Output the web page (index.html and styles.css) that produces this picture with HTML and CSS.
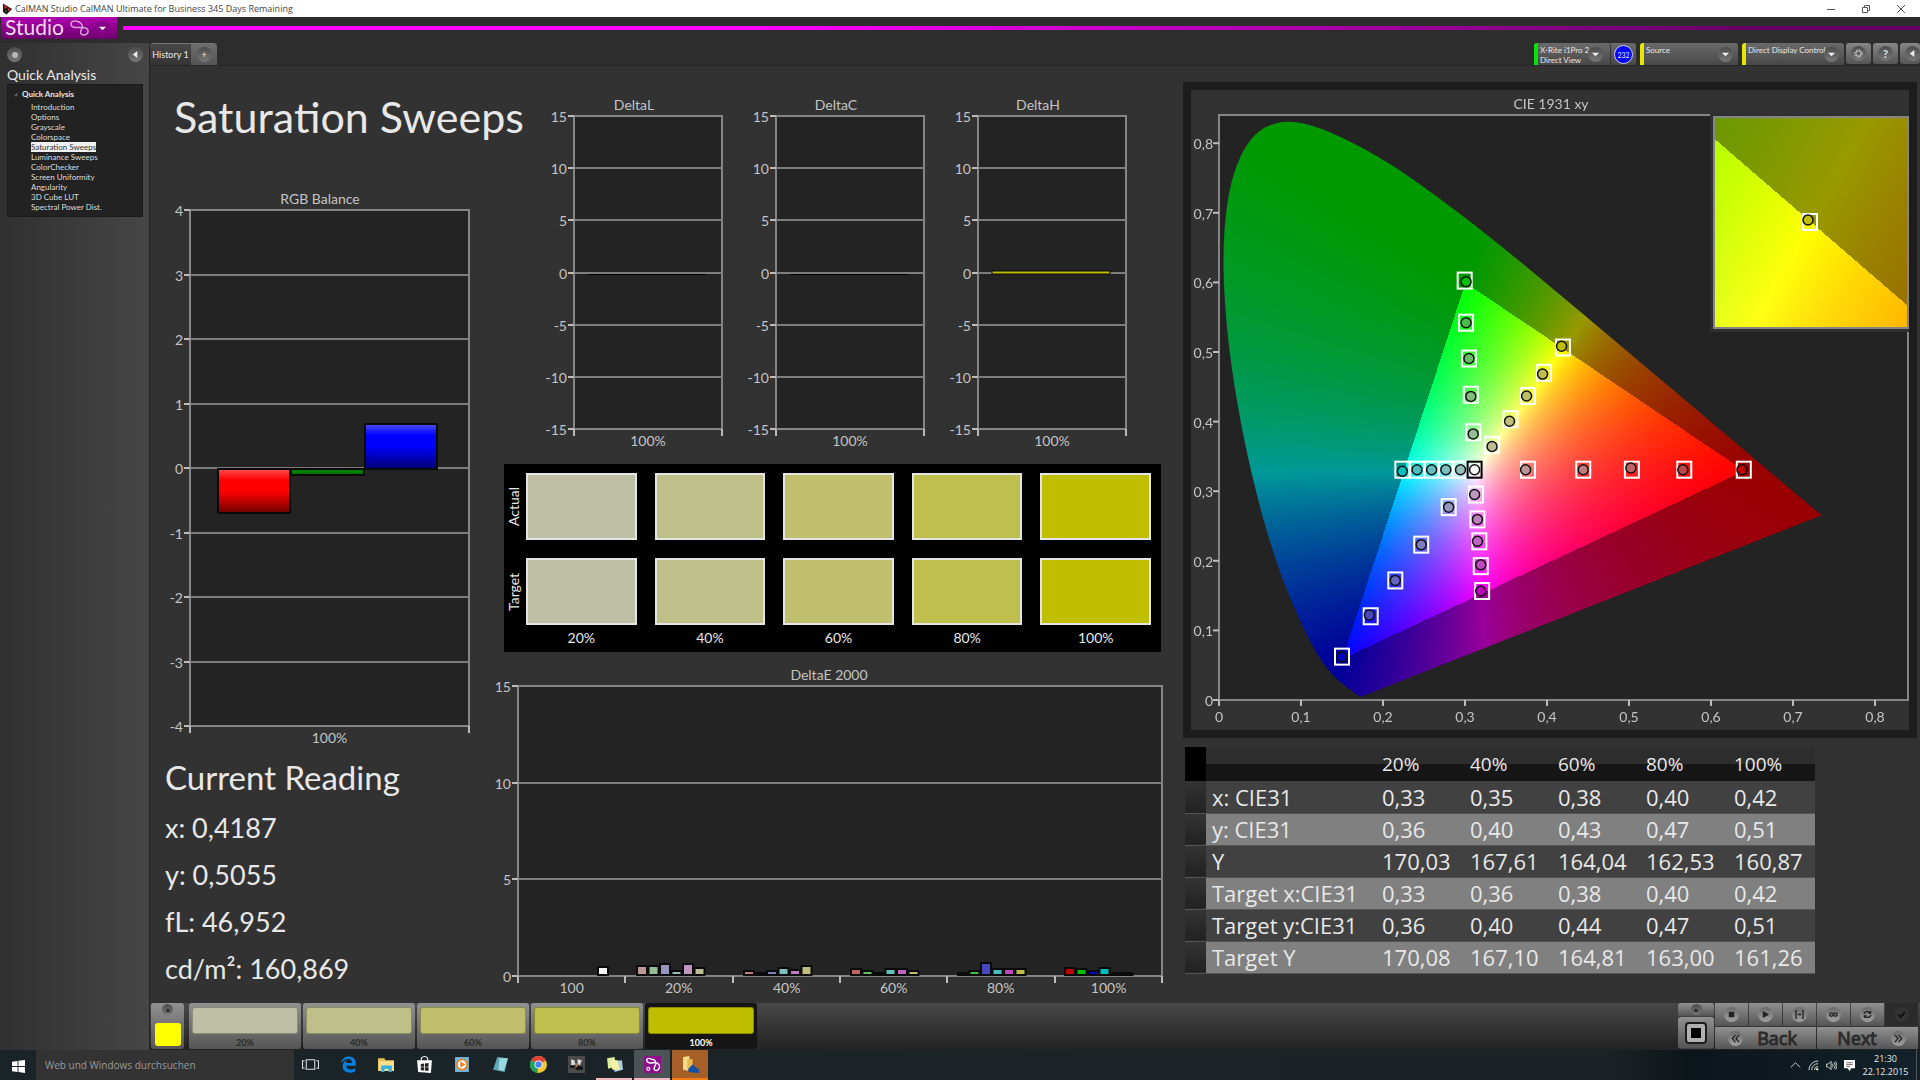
FILE: index.html
```html
<!DOCTYPE html>
<html lang="en">
<head>
  <meta charset="UTF-8">
  <title>CalMAN Studio</title>
  <link rel="stylesheet" href="styles.css">
  <script src="charts.js" defer></script>
</head>
<body>
  <header class="titlebar">
    <svg class="app-icon" viewBox="0 0 12 12"><path d="M1 0l10 6-6 6-4-3z" fill="#201010"/><path d="M2 1l4 3-3 2z" fill="#c22"/><path d="M6 5l3 1-2 3z" fill="#c33"/><path d="M3 7l2 1 0 2z" fill="#2a4"/></svg>
    <span>CalMAN Studio CalMAN Ultimate for Business 345 Days Remaining</span>
    <div class="window-buttons">
      <button aria-label="Minimize"><svg viewBox="0 0 10 10"><path d="M1 5.5h8"/></svg></button>
      <button aria-label="Restore"><svg viewBox="0 0 10 10"><path d="M1.5 3.5h5v5h-5zM3.5 3.5v-2h5v5h-2"/></svg></button>
      <button aria-label="Close"><svg viewBox="0 0 10 10"><path d="M1 1l8 8M9 1l-8 8"/></svg></button>
    </div>
  </header>

  <div class="brandbar">
    <button class="brand">
      <span>Studio</span>
      <svg class="brand-logo" viewBox="0 0 20 17"><path d="M10 2C5 0 0 1 1 5s6 3 9 3 8-1 9 3-4 6-7 4 2-6 1-9-3-4-5-4" fill="none" stroke="#d9a0d9" stroke-width="1.6"/></svg>
      <span class="round brand-arrow"><svg viewBox="0 0 10 10"><path d="M1 3h8L5 7z"/></svg></span>
    </button>
    <div class="brand-line"></div>
  </div>

  <div class="main">
    <aside class="sidebar">
      <div class="sidebar-buttons">
        <button class="round" aria-label="Record"><i class="dot"></i></button>
        <button class="round" aria-label="Collapse"><svg viewBox="0 0 10 10"><path d="M7 1v8L2 5z"/></svg></button>
      </div>
      <h2>Quick Analysis</h2>
      <nav class="tree">
        <div class="tree-head"><svg viewBox="0 0 6 6"><path d="M5 1v4H1z"/></svg>Quick Analysis</div>
        <a href="#">Introduction</a>
        <a href="#">Options</a>
        <a href="#">Grayscale</a>
        <a href="#">Colorspace</a>
        <a href="#" class="current">Saturation Sweeps</a>
        <a href="#">Luminance Sweeps</a>
        <a href="#">ColorChecker</a>
        <a href="#">Screen Uniformity</a>
        <a href="#">Angularity</a>
        <a href="#">3D Cube LUT</a>
        <a href="#">Spectral Power Dist.</a>
      </nav>
    </aside>

    <main class="workspace">
      <div class="toolbar">
        <div class="tabs">
          <button class="tab active">History 1</button>
          <button class="tab tab-add" aria-label="Add"><span class="round">+</span></button>
        </div>
        <div class="devices">
          <div class="device-group">
            <button class="device meter"><span>X-Rite i1Pro 2<br>Direct View</span><i class="round"><svg viewBox="0 0 10 10"><path d="M1 3h8L5 7z"/></svg></i></button>
            <button class="badge">232</button>
          </div>
          <button class="device source"><span>Source</span><i class="round"><svg viewBox="0 0 10 10"><path d="M1 3h8L5 7z"/></svg></i></button>
          <button class="device display"><span>Direct Display Control</span><i class="round"><svg viewBox="0 0 10 10"><path d="M1 3h8L5 7z"/></svg></i></button>
          <button class="tool" aria-label="Settings"><i class="round"><svg viewBox="0 0 10 10"><circle cx="5" cy="5" r="3" fill="none" stroke="#ddd"/><circle cx="5" cy="5" r="4.2" fill="none" stroke="#ddd" stroke-dasharray="1.6 1.7"/></svg></i></button>
          <button class="tool" aria-label="Help"><i class="round">?</i></button>
          <button class="tool tool-last" aria-label="Hide"><i class="round"><svg viewBox="0 0 10 10"><path d="M7 1v8L2 5z"/></svg></i></button>
        </div>
      </div>

      <div class="content">
        <section class="col-left">
          <h1>Saturation Sweeps</h1>
          <svg class="chart" id="rgb-balance" viewBox="0 0 354 560"></svg>
          <div class="reading">
            <h3>Current Reading</h3>
            <p>x: 0,4187</p>
            <p>y: 0,5055</p>
            <p>fL: 46,952</p>
            <p>cd/m²: 160,869</p>
          </div>
        </section>

        <section class="col-middle">
          <div class="deltas">
            <svg class="chart" id="delta-l" viewBox="0 0 202 368"></svg>
            <svg class="chart" id="delta-c" viewBox="0 0 202 368"></svg>
            <svg class="chart" id="delta-h" viewBox="0 0 202 368"></svg>
          </div>
          <div class="patches">
            <span class="side-label">Actual</span>
            <i class="patch s20"></i><i class="patch s40"></i><i class="patch s60"></i><i class="patch s80"></i><i class="patch s100"></i>
            <span class="side-label">Target</span>
            <i class="patch s20"></i><i class="patch s40"></i><i class="patch s60"></i><i class="patch s80"></i><i class="patch s100"></i>
            <span></span>
            <b>20%</b><b>40%</b><b>60%</b><b>80%</b><b>100%</b>
          </div>
          <svg class="chart" id="delta-e" viewBox="0 0 672 332"></svg>
        </section>

        <section class="col-right">
          <div class="cie">
            <canvas id="cie-field" width="718" height="640"></canvas>
            <svg class="chart" id="cie" viewBox="0 0 718 640"></svg>
          </div>
          <table class="results">
            <thead>
              <tr><td></td><th></th><th>20%</th><th>40%</th><th>60%</th><th>80%</th><th>100%</th></tr>
            </thead>
            <tbody>
              <tr><td></td><th>x: CIE31</th><td>0,33</td><td>0,35</td><td>0,38</td><td>0,40</td><td>0,42</td></tr>
              <tr><td></td><th>y: CIE31</th><td>0,36</td><td>0,40</td><td>0,43</td><td>0,47</td><td>0,51</td></tr>
              <tr><td></td><th>Y</th><td>170,03</td><td>167,61</td><td>164,04</td><td>162,53</td><td>160,87</td></tr>
              <tr><td></td><th>Target x:CIE31</th><td>0,33</td><td>0,36</td><td>0,38</td><td>0,40</td><td>0,42</td></tr>
              <tr><td></td><th>Target y:CIE31</th><td>0,36</td><td>0,40</td><td>0,44</td><td>0,47</td><td>0,51</td></tr>
              <tr><td></td><th>Target Y</th><td>170,08</td><td>167,10</td><td>164,81</td><td>163,00</td><td>161,26</td></tr>
            </tbody>
          </table>
        </section>
      </div>

      <div class="bottombar">
        <button class="pattern" aria-label="Pattern"><i class="round"><svg viewBox="0 0 10 10"><path d="M1 8h8L5 2z"/></svg></i><i class="pattern-color"></i></button>
        <div class="steps">
          <button class="step"><i class="s20"></i>20%</button>
          <button class="step"><i class="s40"></i>40%</button>
          <button class="step"><i class="s60"></i>60%</button>
          <button class="step"><i class="s80"></i>80%</button>
          <button class="step selected"><i class="s100"></i>100%</button>
        </div>
        <div class="controls">
          <div class="window-mode">
            <button aria-label="Expand"><i class="round"><svg viewBox="0 0 10 10"><path d="M1 8h8L5 2z"/></svg></i></button>
            <button aria-label="Window"><svg class="window-icon" viewBox="0 0 24 24"><rect x="2" y="2" width="20" height="20" rx="3" fill="#b0b0b0" stroke="#1c1c1c" stroke-width="2"/><path d="M7 7h10v10H7z" fill="#000"/></svg></button>
          </div>
          <div class="transport">
            <button aria-label="Stop"><i class="round"><svg viewBox="0 0 10 10"><path d="M2 2h6v6H2z"/></svg></i></button>
            <button aria-label="Play"><i class="round"><svg viewBox="0 0 10 10"><path d="M2 1l7 4-7 4z"/></svg></i></button>
            <button aria-label="Range"><i class="round"><svg class="line" viewBox="0 0 10 10"><path d="M2.5 1H1v8h1.5M7.5 1H9v8H7.5M3 5h4"/></svg></i></button>
            <button aria-label="Loop"><i class="round"><svg class="line" viewBox="0 0 10 10"><circle cx="2.7" cy="5" r="1.9"/><circle cx="7.3" cy="5" r="1.9"/></svg></i></button>
            <button aria-label="Repeat"><i class="round"><svg class="line" viewBox="0 0 10 10"><path d="M1 4.5a4 3.5 0 0 1 7-1.5M9 5.5a4 3.5 0 0 1-7 1.5M8.5 1v2.5H6M1.5 9V6.5H4"/></svg></i></button>
            <button class="off" aria-label="Accept"><i class="round"><svg class="line" viewBox="0 0 10 10"><path d="M1.5 5l2.5 3 5-6"/></svg></i></button>
            <button class="wide"><i class="round"><svg class="line" viewBox="0 0 10 10"><path d="M5 1L1.5 5 5 9M9 1L5.5 5 9 9"/></svg></i>Back</button>
            <button class="wide">Next<i class="round"><svg class="line" viewBox="0 0 10 10"><path d="M1 1l3.5 4L1 9M5 1l3.5 4L5 9"/></svg></i></button>
          </div>
        </div>
      </div>
    </main>
  </div>

  <footer class="taskbar">
    <button class="start" aria-label="Start"><svg viewBox="0 0 14 14"><path d="M0 2l6-1v5.5H0zM7 .9L14 0v6.5H7zM0 7.5h6V13l-6-1zM7 7.5h7V14l-7-1z" fill="#fff"/></svg></button>
    <input class="search" type="text" placeholder="Web und Windows durchsuchen" aria-label="Web und Windows durchsuchen">
    <div class="apps">
      <button aria-label="Task view"><svg viewBox="0 0 16 16"><path d="M4 3.5h8v9H4zM2.5 4.5h-2v7h2M13.5 4.5h2v7h-2" fill="none" stroke="#ddd"/></svg></button>
      <button aria-label="Edge"><svg viewBox="0 0 16 16"><path d="M1 7C2 2 5 .5 8.5.5 13 .5 15 4 15 7.5v1.7H5.8c.2 4 5 4.3 8.4 2.3v3.1C8 17.5 2 14.5 2.5 9 3 6 5 4.500 6.5 4 5.8 5 5.7 6 5.7 6.5h5.5C11.5 3.5 9.5 2.800 8 2.800 5 2.800 2.500 4.500 1 7z" fill="#0b7fe0"/></svg></button>
      <button aria-label="Explorer"><svg viewBox="0 0 16 16"><path d="M0 2h6l1 2h8v10H0z" fill="#e9c35a"/><path d="M1 5h14v9H1z" fill="#fbe08c"/><path d="M3 9h10v6h-3v-3H6v3H3z" fill="#2fb0e8"/></svg></button>
      <button aria-label="Store"><svg viewBox="0 0 16 16"><path d="M1 4l14 0-1 12-12-1z" fill="#fff"/><path d="M5 5V2q3-3 6 0v3" fill="none" stroke="#fff"/><path d="M4.5 7.5L7.500 7v3h-3zM8.300 7l3.500-.3V10H8.300zM4.500 10.700h3v3l-3-.4zM8.300 10.700h3.500V14l-3.500-.3z" fill="#222"/></svg></button>
      <button aria-label="Media player"><svg viewBox="0 0 16 16"><path d="M1 1h13v14H1z" fill="#79b7d9"/><circle cx="7.5" cy="8" r="5.5" fill="#ee7d1c"/><circle cx="7.5" cy="8" r="4" fill="#fff"/><path d="M6 5l4.500 3L6 11z" fill="#ee7d1c"/></svg></button>
      <button aria-label="Notes"><svg viewBox="0 0 16 16"><path d="M5 1l10 1-3 13-11-2z" fill="#5aa7b5"/><path d="M7 2l8 0-4 12-5-1z" fill="#9cd6de"/></svg></button>
      <button aria-label="Chrome"><svg viewBox="0 0 16 16"><circle cx="8" cy="8" r="8" fill="#f4c430"/><path d="M8 8L1 4A8 8 0 0 1 15 4.3z" fill="#dd4437"/><path d="M8 8L7 16A8 8 0 0 1 1 4z" fill="#1fa15d"/><circle cx="8" cy="8" r="3.8" fill="#fff"/><circle cx="8" cy="8" r="3" fill="#4688f1"/></svg></button>
      <button aria-label="Media"><svg viewBox="0 0 16 16"><path d="M0 0h16v16H0z" fill="#4a4a4a"/><path d="M3 3l3 1 1 4-4 1zM9 3l4 1-2 5-2-2z" fill="#ddd"/><path d="M2 9h4v2H2zM8 9l6 1v3H7z" fill="#111"/><path d="M6 6l4 2-2 3z" fill="#a77c50"/></svg></button>
      <button class="running" aria-label="Sticky notes"><svg viewBox="0 0 16 16"><path d="M1 2l7-1 2 9-8 2z" fill="#d8ec9a"/><path d="M7 5l8-1 1 9-8 2z" fill="#a8cfe0"/><path d="M4 4l7 0 2 9-7 0z" fill="#f6efa5"/></svg></button>
      <button class="running active" aria-label="CalMAN"><svg viewBox="0 0 16 16"><rect width="16" height="16" rx="1" fill="#8c108c"/><path d="M7 3C3 1 1 4 4 6s8-2 10 2-2 7-4 5 2-4 1-7-2-3-4-3" fill="none" stroke="#fff" stroke-width="1.3"/><circle cx="4" cy="12" r="1.5" fill="none" stroke="#fff"/></svg></button>
      <button class="alert" aria-label="Folder"><svg viewBox="0 0 16 16"><path d="M1 1l6-1v14l-6-1z" fill="#f7dc86"/><path d="M5 3h5v11H5z" fill="#e5b94f"/><path d="M6 15v-3l4-4 6 5v3z" fill="#1450a8"/></svg></button>
    </div>
    <div class="tray">
      <svg viewBox="0 0 12 12"><path d="M1 8l5-5 5 5"/></svg>
      <svg viewBox="0 0 12 12"><path d="M1 11A10 10 0 0 1 11 1M4 11a7 7 0 0 1 7-7M7 11a4 4 0 0 1 4-4"/><circle cx="10" cy="10" r="1" fill="#ddd"/></svg>
      <svg viewBox="0 0 12 12"><path d="M.5 4.5h2l3-3v9l-3-3h-2zM7 4q1.5 2 0 4M8.700 2.500q3 3.500 0 7M10.500 1.500q3 4.500 0 9"/></svg>
      <svg viewBox="0 0 12 12"><path d="M0 0h12v9H8l-2 3-2-3H0z" fill="#fff" stroke="none"/><path d="M2.5 3h7M2.5 5h7M2.5 7h4" stroke="#333" stroke-width=".8"/></svg>
    </div>
    <div class="clock">21:30<br>22.12.2015</div>
  </footer>
</body>
</html>
```
FILE: styles.css
```css
* {
    box-sizing: border-box;
}
body {
    margin: 0;
    display: flex;
    flex-direction: column;
    min-height: 100vh;
    background: #323232;
    color: #e8e8e8;
    font-family: Lato, "Open Sans", sans-serif;
}
button {
    margin: 0;
    padding: 0;
    border: 0;
    background: none;
    color: inherit;
    font: inherit;
}
h1, h2, h3, p {
    margin: 0;
    font-weight: normal;
}
i {
    font-style: normal;
}

/* window title */
.titlebar {
    display: flex;
    align-items: center;
    height: 17px;
    padding: 0 14px 0 2px;
    background: #fff;
    color: #444;
    font: 9px/17px "Open Sans", sans-serif;
}
.app-icon {
    width: 11px;
    height: 12px;
    margin-right: 2px;
}
.window-buttons {
    display: flex;
    gap: 25px;
    margin-left: auto;
}
.window-buttons button {
    display: flex;
    width: 10px;
}
.window-buttons svg {
    width: 10px;
    height: 10px;
    fill: none;
    stroke: #555;
}

/* brand strip */
.brandbar {
    display: flex;
    height: 26px;
    background: #2d2d2d;
}
.brand {
    display: flex;
    align-items: center;
    gap: 6px;
    width: 116px;
    height: 22px;
    margin-left: 1px;
    padding: 0 4px;
    background: linear-gradient(#b000b0, #6c006c);
    color: #f0dcf0;
    font-size: 21px;
    line-height: 22px;
}
.brand span:first-child {
    padding-bottom: 2px;
}
.brand-logo {
    width: 19px;
    height: 16px;
}
.round {
    display: flex;
    flex: none;
    align-items: center;
    justify-content: center;
    width: 15px;
    height: 15px;
    border-radius: 50%;
    background: linear-gradient(#4c4c4c, #777);
}
.round svg {
    width: 9px;
    height: 9px;
    fill: #eee;
}
.brand-arrow {
    background: #850085;
}
.brand-line {
    flex: 1;
    height: 4px;
    margin: 9px 0 0 6px;
    background: linear-gradient(90deg, #f0f 0, #f0f 35%, #6a006a 90%);
}

.main {
    display: flex;
    flex: 1;
}

/* sidebar */
.sidebar {
    flex: none;
    width: 150px;
    padding: 4px 6px 4px 7px;
    background: linear-gradient(90deg, #303030, #464646);
    border-right: 1px solid #252525;
}
.sidebar-buttons {
    display: flex;
    justify-content: space-between;
}
.dot {
    width: 6px;
    height: 6px;
    border-radius: 50%;
    background: #b8b8b8;
}
.sidebar h2 {
    padding: 4px 0 0;
    font-size: 14px;
    line-height: 18px;
}
.tree {
    display: flex;
    flex-direction: column;
    align-items: flex-start;
    height: 133px;
    padding: 4px 0 0 23px;
    background: #222;
    border: 1px solid #1a1a1a;
    font-size: 8px;
    line-height: 10px;
}
.tree-head {
    display: flex;
    align-items: center;
    gap: 4px;
    margin-left: -18px;
    padding: 0 0 3px;
    font-weight: bold;
}
.tree-head svg {
    width: 5px;
    height: 5px;
    fill: #666;
}
.tree a {
    color: #ddd;
    text-decoration: none;
}
.tree .current {
    background: #f0f0f0;
    color: #333;
}

/* toolbar */
.workspace {
    display: flex;
    flex: 1;
    flex-direction: column;
    min-width: 0;
}
.toolbar {
    display: flex;
    justify-content: space-between;
    height: 23px;
    background: #2d2d2d;
    border-bottom: 1px solid #282828;
    font-size: 8px;
    line-height: 10px;
}
.tabs, .devices, .device-group {
    display: flex;
}
.tab {
    width: 41px;
    border-radius: 4px 0 0 0;
    border-top: 1px solid #777;
    background: linear-gradient(#484848, #333);
    font-size: 9px;
}
.tab-add {
    display: flex;
    align-items: center;
    justify-content: center;
    width: 26px;
    border-radius: 0 4px 0 0;
    background: linear-gradient(#6d6d6d, #555);
}
.devices {
    gap: 2px;
}
.device-group, .device, .tool {
    background: linear-gradient(#6a6a6a, #484848);
    border-radius: 3px 3px 0 0;
}
.device-group, .source {
    margin-right: 2px;
}
.device {
    display: flex;
    justify-content: space-between;
    width: 98px;
    padding: 2px 5px 0 2px;
    border-left: 4px solid #e6e600;
    text-align: left;
    white-space: nowrap;
}
.device .round {
    margin-top: 2px;
}
.display {
    width: 102px;
}
.display .round, .meter .round {
    margin-left: -10px;
}
.meter {
    width: 77px;
    padding-right: 7px;
    border-left-color: #00e600;
    border-right: 1px solid #333;
}
.badge {
    width: 19px;
    height: 19px;
    margin: 2px 3px;
    border: 1px solid #ccf;
    border-radius: 50%;
    background: #00f;
    font-size: 7px;
    text-align: center;
}
.tool {
    width: 25px;
    height: 21px;
    padding: 3px 5px;
    border-radius: 3px;
    background: linear-gradient(#868686, #555);
    font-size: 11px;
    font-weight: bold;
}
.tool-last {
    width: 20px;
    padding-right: 0;
}

/* page */
.content {
    display: grid;
    flex: 1;
    grid-template-columns: minmax(0, 354fr) minmax(0, 672fr) minmax(0, 744fr);
    background: #323232;
}
.chart {
    display: block;
    width: 100%;
    height: auto;
    overflow: visible;
    font-size: 14px;
    fill: #c4c4c4;
}
.plot {
    fill: #232323;
    stroke: #858585;
    stroke-width: 2;
}
.grid {
    stroke: #7c7c7c;
    stroke-width: 2;
}
.tick {
    stroke: #bbb;
    stroke-width: 2;
}
.end {
    text-anchor: end;
}
.mid {
    text-anchor: middle;
}
.bar {
    stroke: #0a0a0a;
    stroke-width: 2;
}
.hue-bar {
    stroke: #0a0a0a;
    stroke-width: 1;
}
.col-left h1 {
    padding: 22px 0 0 24px;
    height: 124px;
    font-size: 43px;
    line-height: 58px;
    white-space: nowrap;
}
.reading {
    padding: 3px 0 0 15px;
    font-size: 27px;
    line-height: 47px;
}
.reading h3 {
    margin-bottom: 3px;
    font-size: 33px;
    line-height: 48px;
}
.deltas {
    display: grid;
    grid-template-columns: repeat(3, 1fr);
    padding: 30px 42px 0 24px;
}
.patches {
    display: grid;
    grid-template-columns: 22px repeat(4, 128fr) 120fr;
    grid-template-rows: 67px 67px 8px;
    row-gap: 18px;
    height: 188px;
    margin-right: 15px;
    padding-top: 9px;
    background: #000;
    font-size: 14px;
}
.patches .patch {
    margin-right: 18px;
    border: 2px solid #e4e4e4;
}
.patches b {
    margin: -14px 18px 0 0;
    font-weight: normal;
    text-align: center;
}
.patches > :nth-child(6n) {
    margin-right: 10px;
}
.side-label {
    writing-mode: vertical-rl;
    transform: rotate(180deg);
    text-align: center;
    line-height: 20px;
}
.s20 {
    background: #bfbfa5;
}
.s40 {
    background: #bfbf8a;
}
.s60 {
    background: #bfbf6d;
}
.s80 {
    background: #bfbf4d;
}
.s100 {
    background: #bfbf00;
}
#delta-e {
    margin-top: 12px;
}
.col-right {
    padding: 16px 3px 0 7px;
}
.cie {
    display: grid;
    border: 8px solid #1c1c1c;
}
.cie > * {
    grid-area: 1 / 1;
    width: 100%;
}
.cie .chart {
    z-index: 1;
}
.cie .plot {
    fill: none;
}
.target {
    fill: none;
    stroke: #fff;
    stroke-width: 2;
}
.target-white {
    stroke: #000;
}
.measured {
    stroke: #111;
    stroke-width: 1.5;
}

/* results */
.results {
    width: 630px;
    margin: 9px 0 0 2px;
    border-collapse: collapse;
    table-layout: fixed;
    font: 22px/30px "Open Sans", sans-serif;
}
.results tr > * {
    height: 32px;
    padding: 0;
    font-weight: normal;
    text-align: left;
}
.results tbody tr > * {
    border-bottom: 1px solid #555;
}
.results tr > td:first-child {
    width: 21px;
    background: linear-gradient(#333, #222);
}
.results tr > th:nth-child(2) {
    width: 176px;
    padding-left: 6px;
}
.results tr > th:last-child {
    width: 81px;
}
.results thead tr {
    height: 34px;
    background: linear-gradient(#2d2d2d 50%, #161616 50%);
    font-size: 19px;
}
.results thead tr > td:first-child {
    background: #000;
}
.results tbody tr {
    background: #414141;
}
.results tbody tr:nth-child(even) {
    background: #808080;
}

/* bottom bar */
.bottombar {
    display: flex;
    height: 47px;
    padding: 0 2px 1px 1px;
    background: linear-gradient(#484848, #222);
}
.pattern, .step, .controls button {
    background: linear-gradient(#919191, #555);
    border-radius: 3px;
}
.pattern {
    display: flex;
    flex-direction: column;
    align-items: center;
    justify-content: space-between;
    width: 33px;
    padding: 1px 3px 3px;
}
.pattern .round, .window-mode .round {
    width: 11px;
    height: 11px;
}
.bottombar .round svg {
    fill: #222;
}
.pattern .round svg, .window-mode .round svg {
    width: 6px;
    height: 6px;
}
.pattern-color {
    width: 26px;
    height: 23px;
    border-radius: 3px;
    background: #ff0;
}
.steps {
    display: flex;
    gap: 2px;
    margin-left: 5px;
}
.step {
    width: 112px;
    padding: 4px 3px 0;
    color: #2a2a2a;
    font: bold 9px/17px Lato, sans-serif;
}
.step i {
    display: block;
    height: 27px;
    border: 1px solid #0004;
    border-radius: 3px;
}
.step.selected {
    background: #151515;
    color: #fff;
}
.controls {
    display: flex;
    gap: 1px;
    margin-left: auto;
}
.window-mode {
    display: flex;
    flex-direction: column;
    width: 36px;
}
.window-mode button {
    display: flex;
    align-items: center;
    justify-content: center;
    height: 14px;
    border-bottom: 1px solid #444;
}
.window-mode button + button {
    height: 32px;
}
.window-icon {
    width: 24px;
    height: 24px;
}
.transport {
    display: grid;
    grid-template-columns: repeat(6, 33px);
    grid-template-rows: 23px 22px;
    gap: 1px;
}
.transport button {
    display: flex;
    align-items: center;
    justify-content: center;
    border-radius: 0;
}
.transport .round {
    background: linear-gradient(#6a6a6a, #a0a0a0);
}
.transport .off {
    background: #2b2b2b;
}
.transport .off .round {
    background: #333;
}
.bottombar .round .line {
    fill: none;
    stroke: #222;
    stroke-width: 1.4;
}
.transport .off .line {
    stroke: #111;
    stroke-width: 2;
}
.transport .wide {
    grid-column: span 3;
    gap: 14px;
    padding-right: 6px;
    color: #2c2c2c;
    font: 18px/22px "Open Sans", sans-serif;
    -webkit-text-stroke: 1px #2c2c2c;
}
.transport .wide:last-child {
    padding: 0 0 0 8px;
}

/* taskbar */
.taskbar {
    display: flex;
    height: 30px;
    padding-right: 3px;
    background: linear-gradient(90deg, #1a2428, #1b2225 84%, #0c151a 88%, #13222a);
    font-family: "Open Sans", sans-serif;
}
.start {
    width: 36px;
}
.start svg {
    width: 13px;
    height: 13px;
    vertical-align: middle;
}
.search {
    width: 258px;
    padding: 0 9px;
    border: 0;
    background: #333;
    color: #999;
    font: 10px "Open Sans", sans-serif;
}
.search::placeholder {
    color: #999;
}
.apps {
    display: flex;
    gap: 2px;
    margin-left: -2px;
}
.apps button {
    display: flex;
    align-items: center;
    justify-content: center;
    width: 36px;
    border-bottom: 2px solid transparent;
}
.apps svg {
    width: 17px;
    height: 17px;
}
.apps .running {
    border-color: #f2b8c0;
}
.apps .active {
    background: #4c5357;
}
.apps .alert {
    background: #a65f26;
    border-color: #f57c14;
}
.tray {
    display: flex;
    align-items: center;
    gap: 7px;
    margin-left: auto;
}
.tray svg {
    width: 11px;
    height: 11px;
    fill: none;
    stroke: #ddd;
}
.clock {
    width: 62px;
    padding-top: 2px;
    border-right: 1px solid #555;
    font-size: 9px;
    line-height: 13px;
    text-align: center;
}
```
FILE: charts.js
```js
const NS = "http://www.w3.org/2000/svg";

function add(parent, tag, attrs, text) {
  const el = document.createElementNS(NS, tag);
  for (const k in attrs) el.setAttribute(k, attrs[k]);
  if (text !== undefined) el.textContent = text;
  parent.appendChild(el);
  return el;
}

function line(svg, cls, x1, y1, x2, y2) {
  add(svg, "line", {class: cls, x1, y1, x2, y2});
}

// frame, horizontal grid and labels shared by all bar charts
function frame(id, o) {
  const svg = document.getElementById(id);
  add(svg, "rect", {class: "plot", x: o.x, y: o.y, width: o.w, height: o.h});
  add(svg, "text", {class: "mid", x: o.titleX, y: o.y - 6}, o.title);
  const rows = o.labels.length - 1;
  o.labels.forEach((label, i) => {
    const y = Math.round(o.y + o.h * i / rows);
    if (i > 0 && i < rows) line(svg, "grid", o.x, y, o.x + o.w, y);
    line(svg, "tick", o.x - 6, y, o.x, y);
    add(svg, "text", {class: "end", x: o.x - 7, y: y + 6}, label);
  });
  const cols = o.cols.length;
  for (let i = 0; i <= cols; i++) {
    const x = Math.round(o.x + o.w * i / cols);
    line(svg, "tick", x, o.y + o.h, x, o.y + o.h + 7);
    if (i < cols) add(svg, "text", {class: "mid", x: x + o.w / cols / 2, y: o.y + o.h + 17}, o.cols[i]);
  }
  return svg;
}

function shade(svg, id, top, middle, bottom) {
  const g = add(svg, "linearGradient", {id, x1: 0, y1: 0, x2: 0, y2: 1});
  add(g, "stop", {offset: 0, "stop-color": top});
  add(g, "stop", {offset: 0.25, "stop-color": middle});
  add(g, "stop", {offset: 0.5, "stop-color": middle});
  add(g, "stop", {offset: 1, "stop-color": bottom});
}

const rgb = frame("rgb-balance", {
  x: 40, y: 20, w: 279, h: 516, title: "RGB Balance", titleX: 170,
  labels: [4, 3, 2, 1, 0, -1, -2, -3, -4], cols: ["100%"]
});
shade(rgb, "red", "#ff5050", "#ff0000", "#700000");
shade(rgb, "green", "#109010", "#008000", "#006000");
shade(rgb, "blue", "#5050ff", "#0000ff", "#000070");
add(rgb, "rect", {class: "bar", x: 68, y: 279, width: 72, height: 44, fill: "url(#red)"});
add(rgb, "rect", {class: "bar", x: 141, y: 279, width: 73, height: 6, fill: "url(#green)"});
add(rgb, "rect", {class: "bar", x: 215, y: 234, width: 72, height: 45, fill: "url(#blue)"});

for (const [id, title] of [["delta-l", "DeltaL"], ["delta-c", "DeltaC"], ["delta-h", "DeltaH"]]) {
  const svg = frame(id, {
    x: 46, y: 20, w: 148, h: 313, title, titleX: 106,
    labels: [15, 10, 5, 0, -5, -10, -15], cols: ["100%"]
  });
  if (id === "delta-h") add(svg, "rect", {class: "hue-bar", x: 60, y: 175, width: 118, height: 3, fill: "#bfbf00"});
  else add(svg, "rect", {x: 60, y: 178, width: 118, height: 1, fill: "#000"});
}

// patch colors by saturation step
const OFF = [150, 125, 100, 72, 0];
const HUES = {red: [1, 0, 0], green: [0, 1, 0], blue: [0, 0, 1], cyan: [0, 1, 1], magenta: [1, 0, 1], yellow: [1, 1, 0]};
function patchColor(hue, step) {
  return "rgb(" + HUES[hue].map(on => on ? 190 : OFF[step]).join() + ")";
}

const de = frame("delta-e", {
  x: 14, y: 22, w: 644, h: 290, title: "DeltaE 2000", titleX: 325,
  labels: [15, 10, 5, 0], cols: ["100", "20%", "40%", "60%", "80%", "100%"]
});
add(de, "rect", {class: "bar", x: 94, y: 303, width: 10, height: 8, fill: "#f4f4f4"});
[
  [8, 8, 10, 3, 10, 6],
  [3, 1, 3, 6, 4, 8],
  [5, 3, 1, 5, 5, 3],
  [1, 3, 11, 5, 5, 5],
  [6, 5, 3, 6, 1, 1]
].forEach((group, step) => {
  ["red", "green", "blue", "cyan", "magenta", "yellow"].forEach((hue, i) => {
    add(de, "rect", {
      class: "bar", x: 133 + step * 107 + i * 11.5, y: 310 - group[i],
      width: 10, height: group[i] + 1, fill: patchColor(hue, step)
    });
  });
});

// CIE 1931
const px = x => 28 + 820 * x;
const py = y => 610 - 696 * y;

const LOCUS = [
  [.1741, .005], [.1714, .0051], [.1644, .0109], [.1566, .0177], [.144, .0297], [.1355, .0399],
  [.1241, .0578], [.1096, .0868], [.0913, .1327], [.0687, .2007], [.0454, .295], [.0235, .4127],
  [.0082, .5384], [.0039, .6548], [.0139, .7502], [.0389, .812], [.0743, .8338], [.1142, .8262],
  [.1547, .8059], [.1929, .7816], [.2296, .7543], [.3016, .6923], [.3731, .6245], [.4441, .5547],
  [.5125, .4866], [.5752, .4242], [.627, .3725], [.6658, .334], [.6915, .3083], [.719, .2809], [.7347, .2653]
];

// linear Rec. 709 color of a chromaticity, darker outside the gamut
function chroma(x, y) {
  const z = 1 - x - y;
  const c = [
    3.2406 * x - 1.5372 * y - .4986 * z,
    -.9689 * x + 1.8758 * y + .0415 * z,
    .0557 * x - .204 * y + 1.057 * z
  ];
  const scale = Math.min(...c) < 0 ? 153 : 255;
  const max = Math.max(...c);
  return c.map(v => scale * Math.max(v, 0) / max);
}

function field(w, h, toX, toY) {
  const cv = document.createElement("canvas");
  cv.width = w;
  cv.height = h;
  const ctx = cv.getContext("2d");
  const img = ctx.createImageData(w, h);
  for (let j = 0; j < h; j++)
    for (let i = 0; i < w; i++) {
      const c = chroma(toX(i), toY(j));
      img.data.set([c[0], c[1], c[2], 255], (j * w + i) * 4);
    }
  ctx.putImageData(img, 0, 0);
  return cv;
}

const ctx = document.getElementById("cie-field").getContext("2d");
ctx.fillStyle = "#232323";
ctx.fillRect(28, 25, 689, 585);
ctx.save();
ctx.beginPath();
ctx.moveTo(px(LOCUS[0][0]), py(LOCUS[0][1]));
for (let i = 1; i < LOCUS.length - 1; i++) {
  const a = LOCUS[i], b = LOCUS[i + 1];
  ctx.quadraticCurveTo(px(a[0]), py(a[1]), px((a[0] + b[0]) / 2), py((a[1] + b[1]) / 2));
}
ctx.lineTo(px(.7347), py(.2653));
ctx.closePath();
ctx.clip();
ctx.drawImage(field(718, 640, i => (i - 28) / 820, j => (610 - j) / 696), 0, 0);
ctx.restore();

const cie = document.getElementById("cie");
add(cie, "rect", {class: "plot", x: 28, y: 25, width: 689, height: 585});
add(cie, "text", {class: "mid", x: 360, y: 19}, "CIE 1931 xy");
for (let i = 0; i <= 8; i++) {
  const label = i ? "0," + i : "0";
  line(cie, "tick", px(i / 10), 610, px(i / 10), 616);
  line(cie, "tick", 22, py(i / 10), 28, py(i / 10));
  add(cie, "text", {class: "mid", x: px(i / 10), y: 632}, label);
  add(cie, "text", {class: "end", x: 22, y: py(i / 10) + 6}, label);
}

function marker(hue, step, t, m) {
  const white = hue === "white";
  add(cie, "rect", {class: white ? "target target-white" : "target", x: px(t[0]) - 7, y: py(t[1]) - 8, width: 14, height: 16});
  add(cie, "circle", {class: "measured", cx: px(m[0]), cy: py(m[1]), r: 5, fill: white ? "#fff" : patchColor(hue, step)});
}

// target x, y, measured x, y from 20% to 100%
const POINTS = {
  green: [[.31, .3847, .31, .3823], [.3071, .4386, .3071, .4362], [.3048, .4906, .3048, .4906], [.3013, .5421, .3013, .5421], [.2996, .6026, .3013, .6008]],
  yellow: [[.333, .3666, .333, .3642], [.3555, .4035, .3543, .4005], [.3768, .4368, .3751, .4368], [.3964, .4701, .3946, .4683], [.4194, .5064, .4177, .5082]],
  cyan: [[.2945, .3309, .2945, .3309], [.2766, .3309, .2766, .3309], [.2593, .3309, .2593, .3309], [.2415, .3309, .2415, .3309], [.2236, .3309, .2236, .3285]],
  red: [[.3768, .3309, .3739, .3309], [.4442, .3309, .4442, .3309], [.5035, .3309, .5023, .3333], [.5674, .3309, .5657, .3309], [.64, .3309, .6377, .3309]],
  blue: [[.2801, .2771, .2801, .2771], [.2466, .2232, .2466, .2232], [.215, .1718, .215, .1718], [.185, .1203, .1833, .1222], [.15, .0623, .15, .0623]],
  magenta: [[.3134, .2952, .3117, .2952], [.3152, .2595, .3152, .2595], [.3175, .228, .3152, .228], [.3192, .1923, .3192, .1942], [.3209, .1566, .3192, .1566]]
};
for (const hue in POINTS)
  POINTS[hue].forEach((p, step) => marker(hue, step, [p[0], p[1]], [p[2], p[3]]));
marker("white", 0, [.3117, .3309], [.3117, .3309]);

// magnified view around the selected color
add(cie, "rect", {x: 519, y: 23, width: 199, height: 219, fill: "#2f2f2f"});
const inset = add(cie, "foreignObject", {x: 523, y: 27, width: 194, height: 211});
inset.appendChild(field(194, 211, i => .4193 + (i - 97) / 3880, j => .5053 - (j - 105) / 4220));
add(cie, "rect", {class: "plot", x: 523, y: 27, width: 194, height: 211});
add(cie, "rect", {class: "target", x: 612, y: 124, width: 14, height: 16});
add(cie, "circle", {class: "measured", cx: 617, cy: 130, r: 5, fill: "#bfbf00"});
```
